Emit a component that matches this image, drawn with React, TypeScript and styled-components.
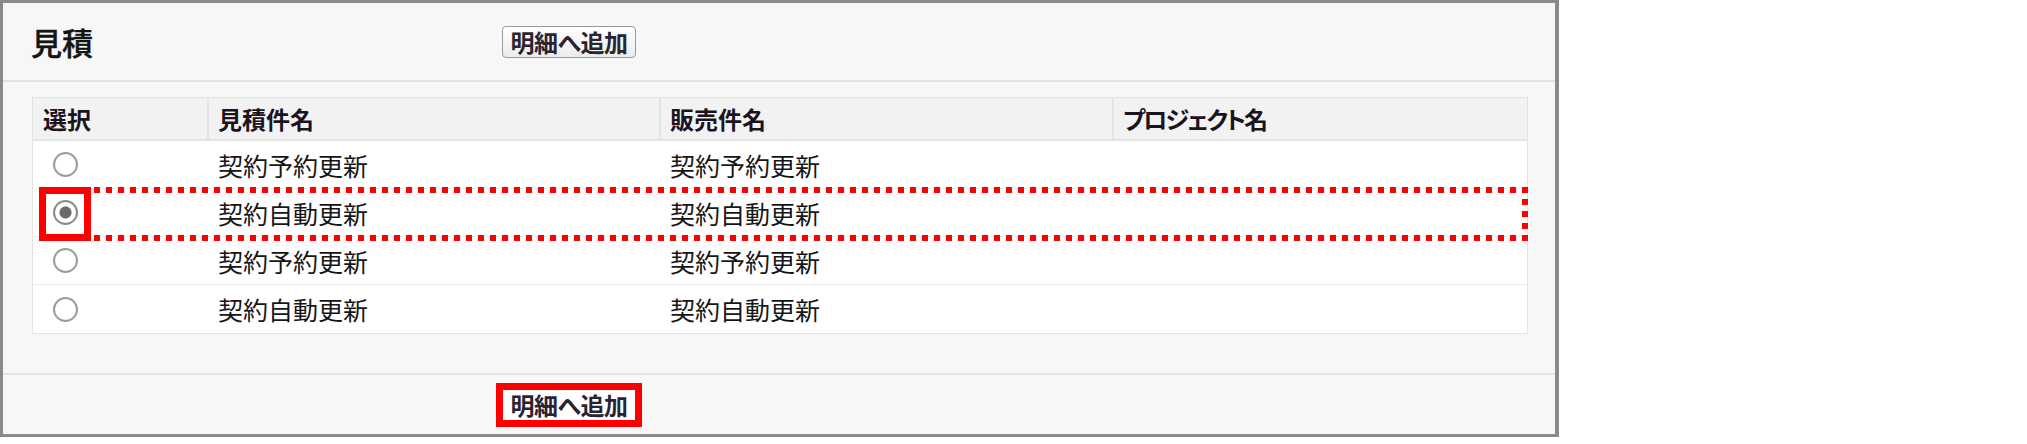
import React from "react";
import styled, { createGlobalStyle } from "styled-components";

const GlobalStyle = createGlobalStyle`
  html, body { margin: 0; padding: 0; background: #ffffff; }
  body { font-family: "Noto Sans CJK JP", "Liberation Sans", sans-serif; color: #111; }
`;

const Panel = styled.section`
  box-sizing: border-box;
  width: 1559px;
  height: 437px;
  border: 3px solid #8a8a8a;
  border-right-width: 4px;
  background: #f7f7f7;
  display: flex;
  flex-direction: column;
`;

const Header = styled.header`
  height: 77px;
  display: grid;
  grid-template-columns: 471px 1fr;
  align-items: center;
  padding-left: 28px;
  border-bottom: 2px solid #e2e2e2;
`;

const Title = styled.h2`
  margin: 0;
  font-size: 31px;
  line-height: 34px;
  font-weight: 500;
  color: #141414;
  -webkit-text-stroke: 0.4px #141414;
`;

const ButtonBar = styled.div`
  display: flex;
  align-items: center;
`;

const Button = styled.button<{ $highlight?: boolean }>`
  box-sizing: border-box;
  width: 134px;
  height: 32px;
  padding: 0;
  border: 1px solid #9a9a9a;
  border-radius: 4px;
  background: linear-gradient(#ffffff, #ececec);
  font-family: "Noto Sans CJK JP", "Liberation Sans", sans-serif;
  font-size: 24px;
  line-height: 30px;
  font-weight: 700;
  color: #2a2430;
  letter-spacing: -0.5px;
  font-feature-settings: "palt";
  cursor: pointer;
  ${(p) =>
    p.$highlight &&
    `
    background: #ffffff;
    border-radius: 0;
    outline: 7px solid #ff0000;
    outline-offset: -1px;
  `}
`;

const Body = styled.div`
  flex: 1;
  padding: 15px 27px 0 29px;
`;

const Table = styled.div`
  border: 1px solid #e2e2e2;
  background: #ffffff;
`;

const COLS = "174px 452px 453px 1fr";

const HeadRow = styled.div`
  display: grid;
  grid-template-columns: ${COLS};
  height: 41px;
  background: #f2f2f3;
  border-bottom: 2px solid #e4e4e4;
`;

const HeadCell = styled.div<{ $first?: boolean; $kana?: boolean }>`
  display: flex;
  align-items: center;
  padding-left: ${(p) => (p.$first ? "10px" : "9px")};
  border-left: ${(p) => (p.$first ? "none" : "2px solid #e4e4e4")};
  font-size: 24px;
  font-weight: 700;
  color: #1b1420;
  font-feature-settings: "palt";
  letter-spacing: ${(p) => (p.$kana ? "-2px" : "0")};
  white-space: nowrap;
`;

const Row = styled.div<{ $last?: boolean }>`
  position: relative;
  display: grid;
  grid-template-columns: ${COLS};
  height: 48px;
  border-bottom: ${(p) => (p.$last ? "none" : "1px solid #ececec")};
  box-sizing: border-box;
`;

const Cell = styled.div<{ $first?: boolean }>`
  display: flex;
  align-items: center;
  padding-left: ${(p) => (p.$first ? "0" : "11px")};
  font-size: 25px;
  color: #161616;
  white-space: nowrap;
`;

const Radio = styled.input.attrs({ type: "radio" })`
  appearance: none;
  -webkit-appearance: none;
  box-sizing: border-box;
  margin: 0 0 0 20px;
  width: 25px;
  height: 25px;
  border-radius: 50%;
  border: 2px solid #9b9b9b;
  background: radial-gradient(circle, #ffffff 60%, #f0f0f0 100%);
  &:checked {
    border-color: #8a8a8a;
    background: radial-gradient(circle, #6a6a6a 0 5.5px, #ffffff 6.5px 100%);
  }
`;

const MarkBox = styled.div`
  position: absolute;
  left: 6px;
  top: -2px;
  width: 52px;
  height: 54px;
  box-sizing: border-box;
  border: 7px solid #ff0000;
  pointer-events: none;
`;

const DotFrame = styled.div`
  position: absolute;
  left: 61px;
  top: -2px;
  width: 1434px;
  height: 54px;
  pointer-events: none;
  background:
    repeating-linear-gradient(to right, #ff0000 0 6px, transparent 6px 12px) left top / 100% 6px no-repeat,
    repeating-linear-gradient(to right, #ff0000 0 6px, transparent 6px 12px) left bottom / 100% 6px no-repeat,
    repeating-linear-gradient(to bottom, #ff0000 0 6px, transparent 6px 12px) right 0 top 12px / 6px 100% no-repeat;
`;

const Footer = styled.footer`
  height: 59px;
  display: grid;
  grid-template-columns: 471px 1fr;
  align-items: center;
  padding-left: 28px;
  border-top: 2px solid #e2e2e2;
`;

type Item = { quote: string; sales: string; project: string; selected?: boolean };

const items: Item[] = [
  { quote: "契約予約更新", sales: "契約予約更新", project: "" },
  { quote: "契約自動更新", sales: "契約自動更新", project: "", selected: true },
  { quote: "契約予約更新", sales: "契約予約更新", project: "" },
  { quote: "契約自動更新", sales: "契約自動更新", project: "" },
];

export default function App() {
  return (
    <>
      <GlobalStyle />
      <Panel>
        <Header>
          <Title>見積</Title>
          <ButtonBar>
            <Button type="button">明細へ追加</Button>
          </ButtonBar>
        </Header>
        <Body>
          <Table>
            <HeadRow>
              <HeadCell $first>選択</HeadCell>
              <HeadCell>見積件名</HeadCell>
              <HeadCell>販売件名</HeadCell>
              <HeadCell $kana>プロジェクト名</HeadCell>
            </HeadRow>
            {items.map((it, i) => (
              <Row key={i} $last={i === items.length - 1}>
                <Cell $first>
                  <Radio name="quote" defaultChecked={!!it.selected} readOnly />
                </Cell>
                <Cell>{it.quote}</Cell>
                <Cell>{it.sales}</Cell>
                <Cell>{it.project}</Cell>
                {it.selected && (
                  <>
                    <MarkBox />
                    <DotFrame />
                  </>
                )}
              </Row>
            ))}
          </Table>
        </Body>
        <Footer>
          <span />
          <ButtonBar>
            <Button type="button" $highlight>
              明細へ追加
            </Button>
          </ButtonBar>
        </Footer>
      </Panel>
    </>
  );
}
